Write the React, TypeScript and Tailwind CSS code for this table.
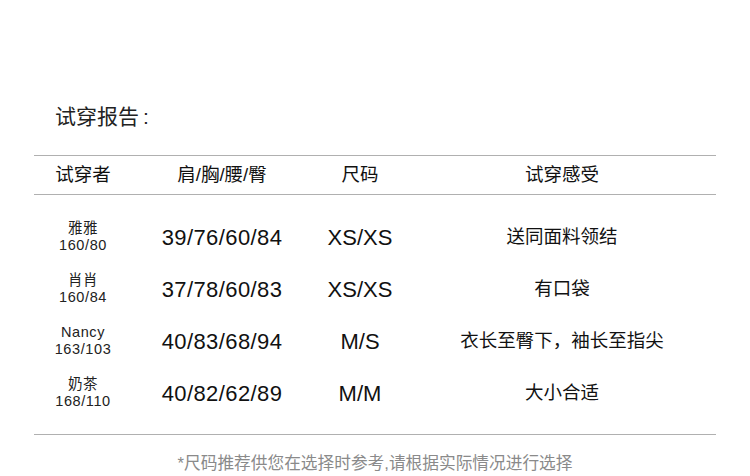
import React from "react";

const rows = [
  { name: "雅雅", hw: "160/80", m: "39/76/60/84", s: "XS/XS", f: "送同面料领结" },
  { name: "肖肖", hw: "160/84", m: "37/78/60/83", s: "XS/XS", f: "有口袋" },
  { name: "Nancy", hw: "163/103", m: "40/83/68/94", s: "M/S", f: "衣长至臀下，袖长至指尖" },
  { name: "奶茶", hw: "168/110", m: "40/82/62/89", s: "M/M", f: "大小合适" },
];

export default function App() {
  return (
    <div
      className="w-[750px] h-[476px] bg-white overflow-hidden text-[#111]"
      style={{ fontFamily: '"Liberation Sans", "Noto Sans CJK SC", sans-serif' }}
    >
      <div className="ml-[34px] w-[682px] pt-[102px]">
        <div className="pl-[21px] text-[21px] leading-[30px] text-[#222]">
          试穿报告<span className="ml-[4px]">:</span>
        </div>
        <div className="mt-[23px] border-t border-b border-[#b0b0b0] h-[40px] flex items-center text-[18.5px]">
          <div className="w-[98px] text-center">试穿者</div>
          <div className="w-[180px] text-center">肩/胸/腰/臀</div>
          <div className="w-[96px] text-center">尺码</div>
          <div className="w-[308px] text-center">试穿感受</div>
        </div>
        <div className="pt-[16px] pb-[15px] border-b border-[#b0b0b0]">
          {rows.map((r) => (
            <div key={r.name} className="h-[52px] flex items-center">
              <div className="w-[98px] flex flex-col items-center text-[14.5px] leading-[17px] tracking-[0.6px] text-[#222]">
                <div>{r.name}</div>
                <div>{r.hw}</div>
              </div>
              <div className="w-[180px] text-center text-[22px] tracking-[0.4px]">{r.m}</div>
              <div className="w-[96px] text-center text-[22px]">{r.s}</div>
              <div className="w-[308px] text-center text-[18.5px]">{r.f}</div>
            </div>
          ))}
        </div>
        <div className="mt-[17px] text-center text-[16.7px] leading-[24px] text-[#8a8a8a]">
          *尺码推荐供您在选择时参考,请根据实际情况进行选择
        </div>
      </div>
    </div>
  );
}
